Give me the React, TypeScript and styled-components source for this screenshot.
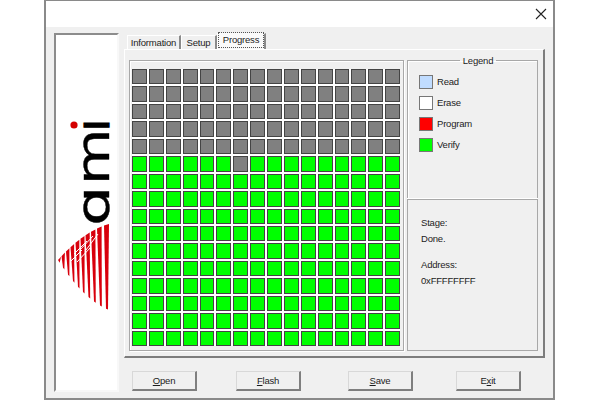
import styled, { createGlobalStyle } from 'styled-components';

const GlobalStyle = createGlobalStyle`
  html, body {
    margin: 0;
    padding: 0;
    background: #fff;
  }
  body {
    font-family: "Liberation Sans", Arial, sans-serif;
    font-size: 9.5px;
    letter-spacing: -0.2px;
    color: #1c1c1c;
  }
`;

const Page = styled.div`
  width: 600px;
  height: 400px;
  padding-left: 44px;
  box-sizing: border-box;
  overflow: hidden;
`;

const Window = styled.div`
  width: 511px;
  height: 400px;
  box-sizing: border-box;
  border: 2px solid #8a8a8a;
  border-top-width: 1px;
  display: flex;
  flex-direction: column;
  background: #f0f0f0;
`;

const TitleBar = styled.div`
  height: 26px;
  flex: none;
  background: #fff;
  display: flex;
  align-items: center;
  justify-content: flex-end;
  padding-right: 6px;
`;

const Body = styled.div`
  flex: 1;
  display: flex;
  gap: 5px;
  padding: 6px 0 6px 8px;
  min-height: 0;
`;

const LogoPanel = styled.div`
  width: 65px;
  flex: none;
  box-sizing: border-box;
  background: #fff;
  border-style: solid;
  border-width: 2px;
  border-color: #8c8c8c #f8f8f8 #f8f8f8 #8c8c8c;
`;

const Main = styled.div`
  width: 421px;
  flex: none;
  display: flex;
  flex-direction: column;
`;

const TabStrip = styled.div`
  height: 16px;
  display: flex;
  align-items: flex-end;
  padding-left: 3px;
`;

const Tab = styled.div<{ $active?: boolean; $width: number }>`
  width: ${p => p.$width}px;
  height: ${p => (p.$active ? 16 : 14)}px;
  box-sizing: border-box;
  display: flex;
  align-items: center;
  justify-content: center;
  background: ${p => (p.$active ? '#f7f7f7' : '#f0f0f0')};
  border-top: 1px solid #fff;
  border-left: 1px solid #fff;
  border-right: 2px solid #8a8a8a;
  white-space: nowrap;
  padding-bottom: ${p => (p.$active ? 3 : 1)}px;
`;

const FocusRing = styled.span`
  outline: 1px dotted #555;
  padding: 1px 4px 2px;
  background: #fafafa;
`;

const TabPane = styled.div`
  height: 309px;
  box-sizing: border-box;
  flex: none;
  border-style: solid;
  border-width: 1px 2px 2px 1px;
  border-color: #fff #7d7d7d #7d7d7d #fff;
  padding: 10px 5px 5px 4px;
  display: flex;
  gap: 3px;
`;

const MapFrame = styled.div`
  width: 275px;
  flex: none;
  box-sizing: border-box;
  border: 1px solid #a8a8a8;
  box-shadow: 1px 1px 0 #fff, inset 1px 1px 0 #fff;
  padding: 8px 3px 4px 2px;
`;

const CellGrid = styled.div`
  height: 100%;
  display: grid;
  grid-template-columns: repeat(16, 1fr);
  grid-template-rows: repeat(16, 1fr);
  gap: 2px;
  background: #fff;
`;

const Cell = styled.div<{ $done: boolean }>`
  box-sizing: border-box;
  border: 1.5px solid #444;
  background: ${p => (p.$done ? '#00ff00' : '#808080')};
`;

const SidePanel = styled.div`
  flex: 1;
  display: flex;
  flex-direction: column;
  min-width: 0;
`;

const LegendBox = styled.fieldset`
  margin: -5px 0 0;
  padding: 8px 0 0 11px;
  height: 145px;
  box-sizing: border-box;
  flex: none;
  border: 1px solid #a8a8a8;
  box-shadow: inset 1px 1px 0 #fff;
  display: flex;
  flex-direction: column;
  gap: 6px;
`;

const LegendTitle = styled.legend`
  margin: 0 auto;
  padding: 0 3px;
  line-height: 11px;
`;

const LegendRow = styled.div`
  display: flex;
  align-items: center;
  gap: 4px;
  height: 15px;
`;

const Swatch = styled.span<{ $color: string }>`
  width: 14px;
  height: 14px;
  box-sizing: border-box;
  border: 1px solid #777;
  background: ${p => p.$color};
`;

const StatusBox = styled.div`
  flex: 1;
  border: 1px solid #a8a8a8;
  border-top: 0;
  box-shadow: 0 -1px 0 #a8a8a8, 0 -2px 0 #fff;
  padding: 15px 0 0 13px;
  display: flex;
  flex-direction: column;
`;

const StatusLine = styled.div<{ $gapAfter?: number }>`
  height: 16px;
  line-height: 16px;
  margin-bottom: ${p => p.$gapAfter ?? 0}px;
`;

const ButtonRow = styled.div`
  display: grid;
  grid-template-columns: 104px 112px 108px 65px;
  padding: 13px 0 0 8px;
`;

const Button = styled.button`
  width: 65px;
  height: 20px;
  padding: 0;
  box-sizing: border-box;
  font: inherit;
  letter-spacing: inherit;
  color: inherit;
  background: #f0f0f0;
  border-style: solid;
  border-width: 1px 2px 2px 1px;
  border-color: #d8d8d8 #7f7f7f #7f7f7f #d8d8d8;
`;

const Key = styled.span`
  text-decoration: underline;
`;

// left part of the logo: red fan cut into slanted bars
const bow = (x: number) => {
  const t = (x - 58) / 51;
  return 1.6 * t - 0.6 * t * t;
};
const upper = (x: number) => 260 - 36 * bow(x);
const lower = (x: number) => 260 + 50 * bow(x);

const bars: [number, number, number][] = [
  [104, 106, 5],
  [97, 100, 4.6],
  [91, 94, 4.4],
  [85.5, 88.5, 4.2],
  [80.5, 83, 4],
  [75.5, 78, 3.8],
  [70.5, 73, 3.6],
  [66, 68, 3.4],
  [61.5, 63, 3.4],
  [58, 58.5, 3],
];

const barPoints = ([top, bottom, w]: [number, number, number]) =>
  `${top},${upper(top)} ${top + w},${upper(top + w)} ${bottom + w * 0.4},${lower(bottom + w * 0.4)} ${bottom},${lower(bottom)}`;

const cuts = [
  [74, 254, 87, 241],
  [80, 250, 93, 236],
  [86, 250, 98, 234],
  [70, 262, 82, 250],
  [77, 262, 90, 248],
];

const Logo = () => (
  <svg width="61" height="357" viewBox="56 35 61 357" style={{ display: 'block', overflow: 'visible' }}>
    <g fontFamily="DejaVu Sans, sans-serif" fontSize="46" fill="#000" stroke="#000">
      <text transform="translate(109 131.4) rotate(-90)" strokeWidth="1.2">&#305;</text>
      <text transform="translate(109 185) rotate(-90) scale(1.26 1)" strokeWidth="0.4">m</text>
      <text transform="translate(109 226) rotate(-90) scale(1.38 1)" strokeWidth="0.4">&#593;</text>
    </g>
    <circle cx="74" cy="125" r="3.6" fill="#d40000" />
    {bars.map(b => (
      <polygon key={b[0]} points={barPoints(b)} fill="#d8000c" />
    ))}
    <g stroke="#fff" strokeWidth="1">
      {cuts.map(c => (
        <line key={c[0]} x1={c[0]} y1={c[1]} x2={c[2]} y2={c[3]} />
      ))}
    </g>
  </svg>
);

const progress = Array.from({ length: 256 }, (_, i) => i >= 80 && i !== 86);

const legend = [
  { label: 'Read', color: '#c0dcff' },
  { label: 'Erase', color: '#ffffff' },
  { label: 'Program', color: '#ff0000' },
  { label: 'Verify', color: '#00ff00' },
];

const App = () => (
  <Page>
    <GlobalStyle />
    <Window>
      <TitleBar>
        <svg width="12" height="12" viewBox="0 0 12 12">
          <path d="M1 1L11 11M11 1L1 11" stroke="#222" strokeWidth="1.1" fill="none" />
        </svg>
      </TitleBar>
      <Body>
        <LogoPanel>
          <Logo />
        </LogoPanel>
        <Main>
          <TabStrip>
            <Tab $width={54}>Information</Tab>
            <Tab $width={36}>Setup</Tab>
            <Tab $active $width={49}>
              <FocusRing>Progress</FocusRing>
            </Tab>
          </TabStrip>
          <TabPane>
            <MapFrame>
              <CellGrid>
                {progress.map((done, i) => (
                  <Cell key={i} $done={done} />
                ))}
              </CellGrid>
            </MapFrame>
            <SidePanel>
              <LegendBox>
                <LegendTitle>Legend</LegendTitle>
                {legend.map(item => (
                  <LegendRow key={item.label}>
                    <Swatch $color={item.color} />
                    {item.label}
                  </LegendRow>
                ))}
              </LegendBox>
              <StatusBox>
                <StatusLine>Stage:</StatusLine>
                <StatusLine $gapAfter={10}>Done.</StatusLine>
                <StatusLine>Address:</StatusLine>
                <StatusLine>0xFFFFFFFF</StatusLine>
              </StatusBox>
            </SidePanel>
          </TabPane>
          <ButtonRow>
            <Button><Key>O</Key>pen</Button>
            <Button><Key>F</Key>lash</Button>
            <Button><Key>S</Key>ave</Button>
            <Button>E<Key>x</Key>it</Button>
          </ButtonRow>
        </Main>
      </Body>
    </Window>
  </Page>
);

export default App;
